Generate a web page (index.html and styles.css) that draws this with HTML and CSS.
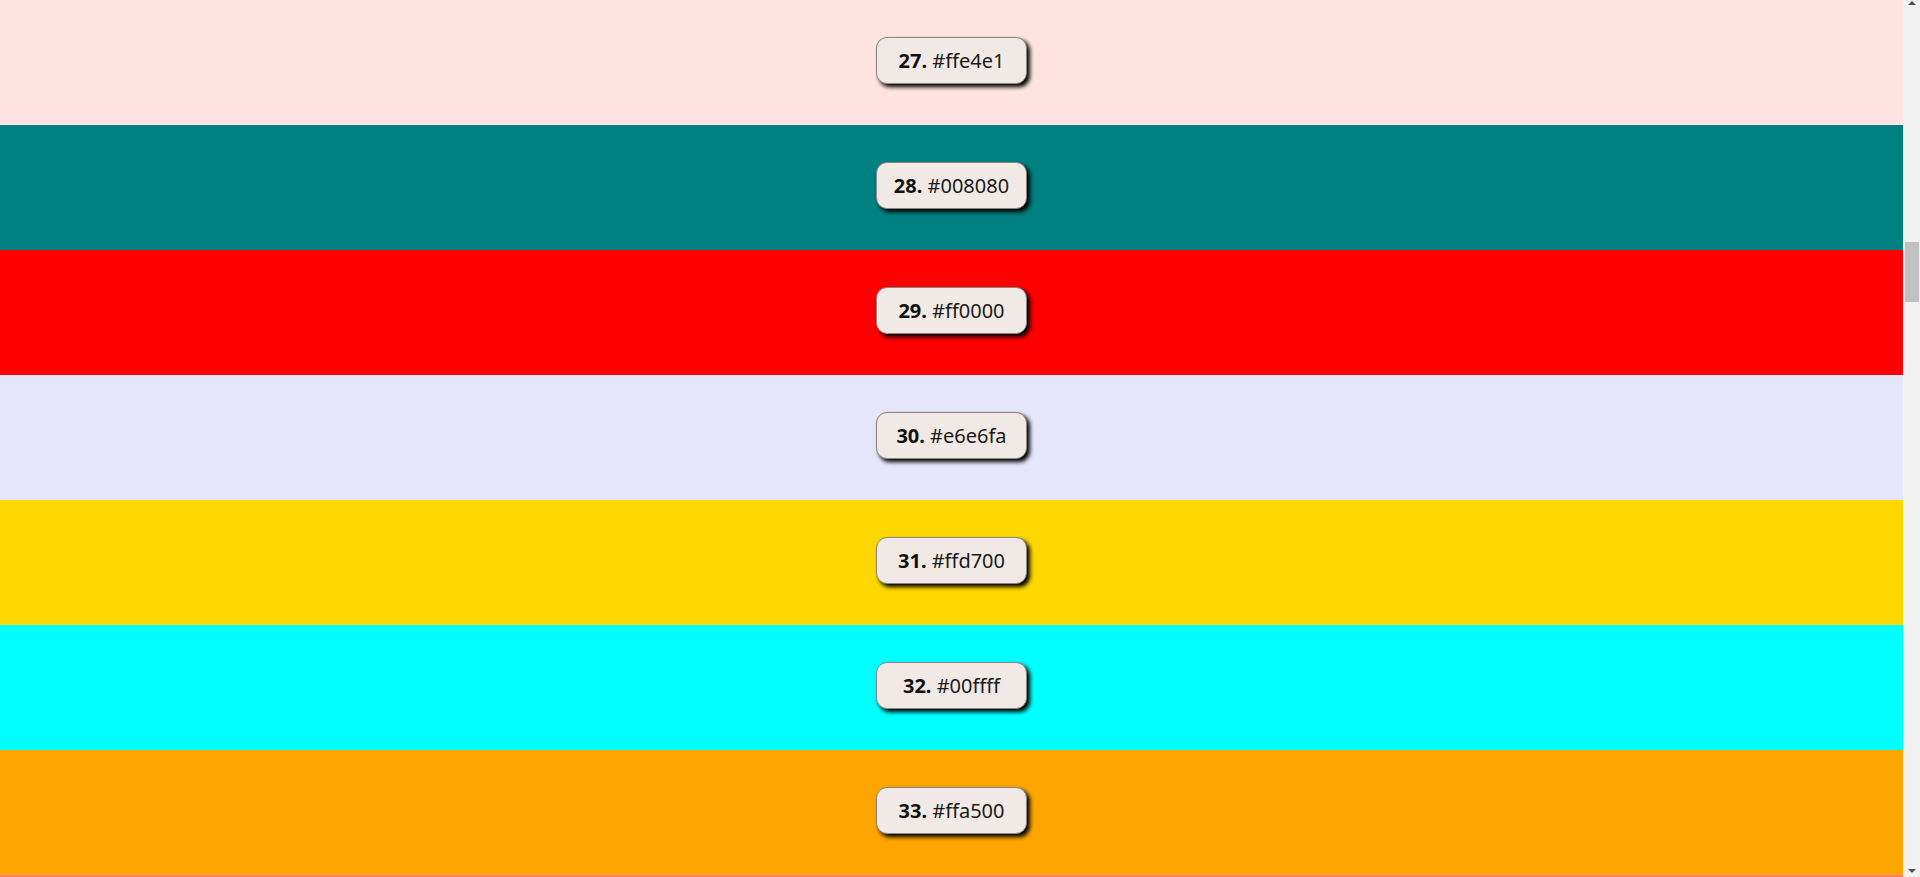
FILE: index.html
```html
<!DOCTYPE html>
<html lang="en">
<head>
<meta charset="utf-8">
<title>Colors</title>
<link rel="stylesheet" href="styles.css">
</head>
<body>
<div class="page">
  <main class="list">
    <section class="band" style="background:#ffe4e1"><div class="chip"><b>27.</b> #ffe4e1</div></section>
    <section class="band" style="background:#008080"><div class="chip"><b>28.</b> #008080</div></section>
    <section class="band" style="background:#ff0000"><div class="chip"><b>29.</b> #ff0000</div></section>
    <section class="band" style="background:#e6e6fa"><div class="chip"><b>30.</b> #e6e6fa</div></section>
    <section class="band" style="background:#ffd700"><div class="chip"><b>31.</b> #ffd700</div></section>
    <section class="band" style="background:#00ffff"><div class="chip"><b>32.</b> #00ffff</div></section>
    <section class="band" style="background:#ffa500"><div class="chip"><b>33.</b> #ffa500</div></section>
    <section class="band" style="background:#fa8072"></section>
  </main>
  <aside class="scrollbar" aria-hidden="true">
    <span class="arrow arrow-up"></span>
    <span class="thumb"></span>
    <span class="arrow arrow-down"></span>
  </aside>
</div>
</body>
</html>
```

FILE: styles.css
```css
html, body {
  margin: 0;
  padding: 0;
  height: 100%;
  overflow: hidden;
}

body {
  font-family: "Noto Sans", "Open Sans", sans-serif;
  color: #1a1a1a;
}

.page {
  display: flex;
  height: 100vh;
}

.list {
  flex: 1;
  display: flex;
  flex-direction: column;
  overflow: hidden;
}

.band {
  flex: 0 0 125px;
  display: flex;
  align-items: center;
  justify-content: center;
}

.chip {
  box-sizing: border-box;
  width: 151px;
  background: #f1e9e5;
  border: 1px solid #8c8681;
  border-radius: 11px;
  box-shadow: 3px 3px 4px #000;
  padding: 9px 0;
  margin-bottom: 4px;
  font-size: 20px;
  line-height: 27px;
  text-align: center;
  white-space: nowrap;
}

.chip b {
  font-weight: 700;
  color: #111;
}

.scrollbar {
  flex: 0 0 17px;
  background: #f1f1f1;
  display: flex;
  flex-direction: column;
  align-items: center;
}

.arrow {
  width: 0;
  height: 0;
  border-left: 4px solid transparent;
  border-right: 4px solid transparent;
}

.arrow-up {
  margin-top: 1px;
  border-bottom: 4px solid #505050;
}

.arrow-down {
  margin-top: auto;
  margin-bottom: 4px;
  border-top: 4px solid #505050;
}

.thumb {
  width: 14px;
  height: 60px;
  margin-top: 237px;
  background: #c1c1c1;
}
```
